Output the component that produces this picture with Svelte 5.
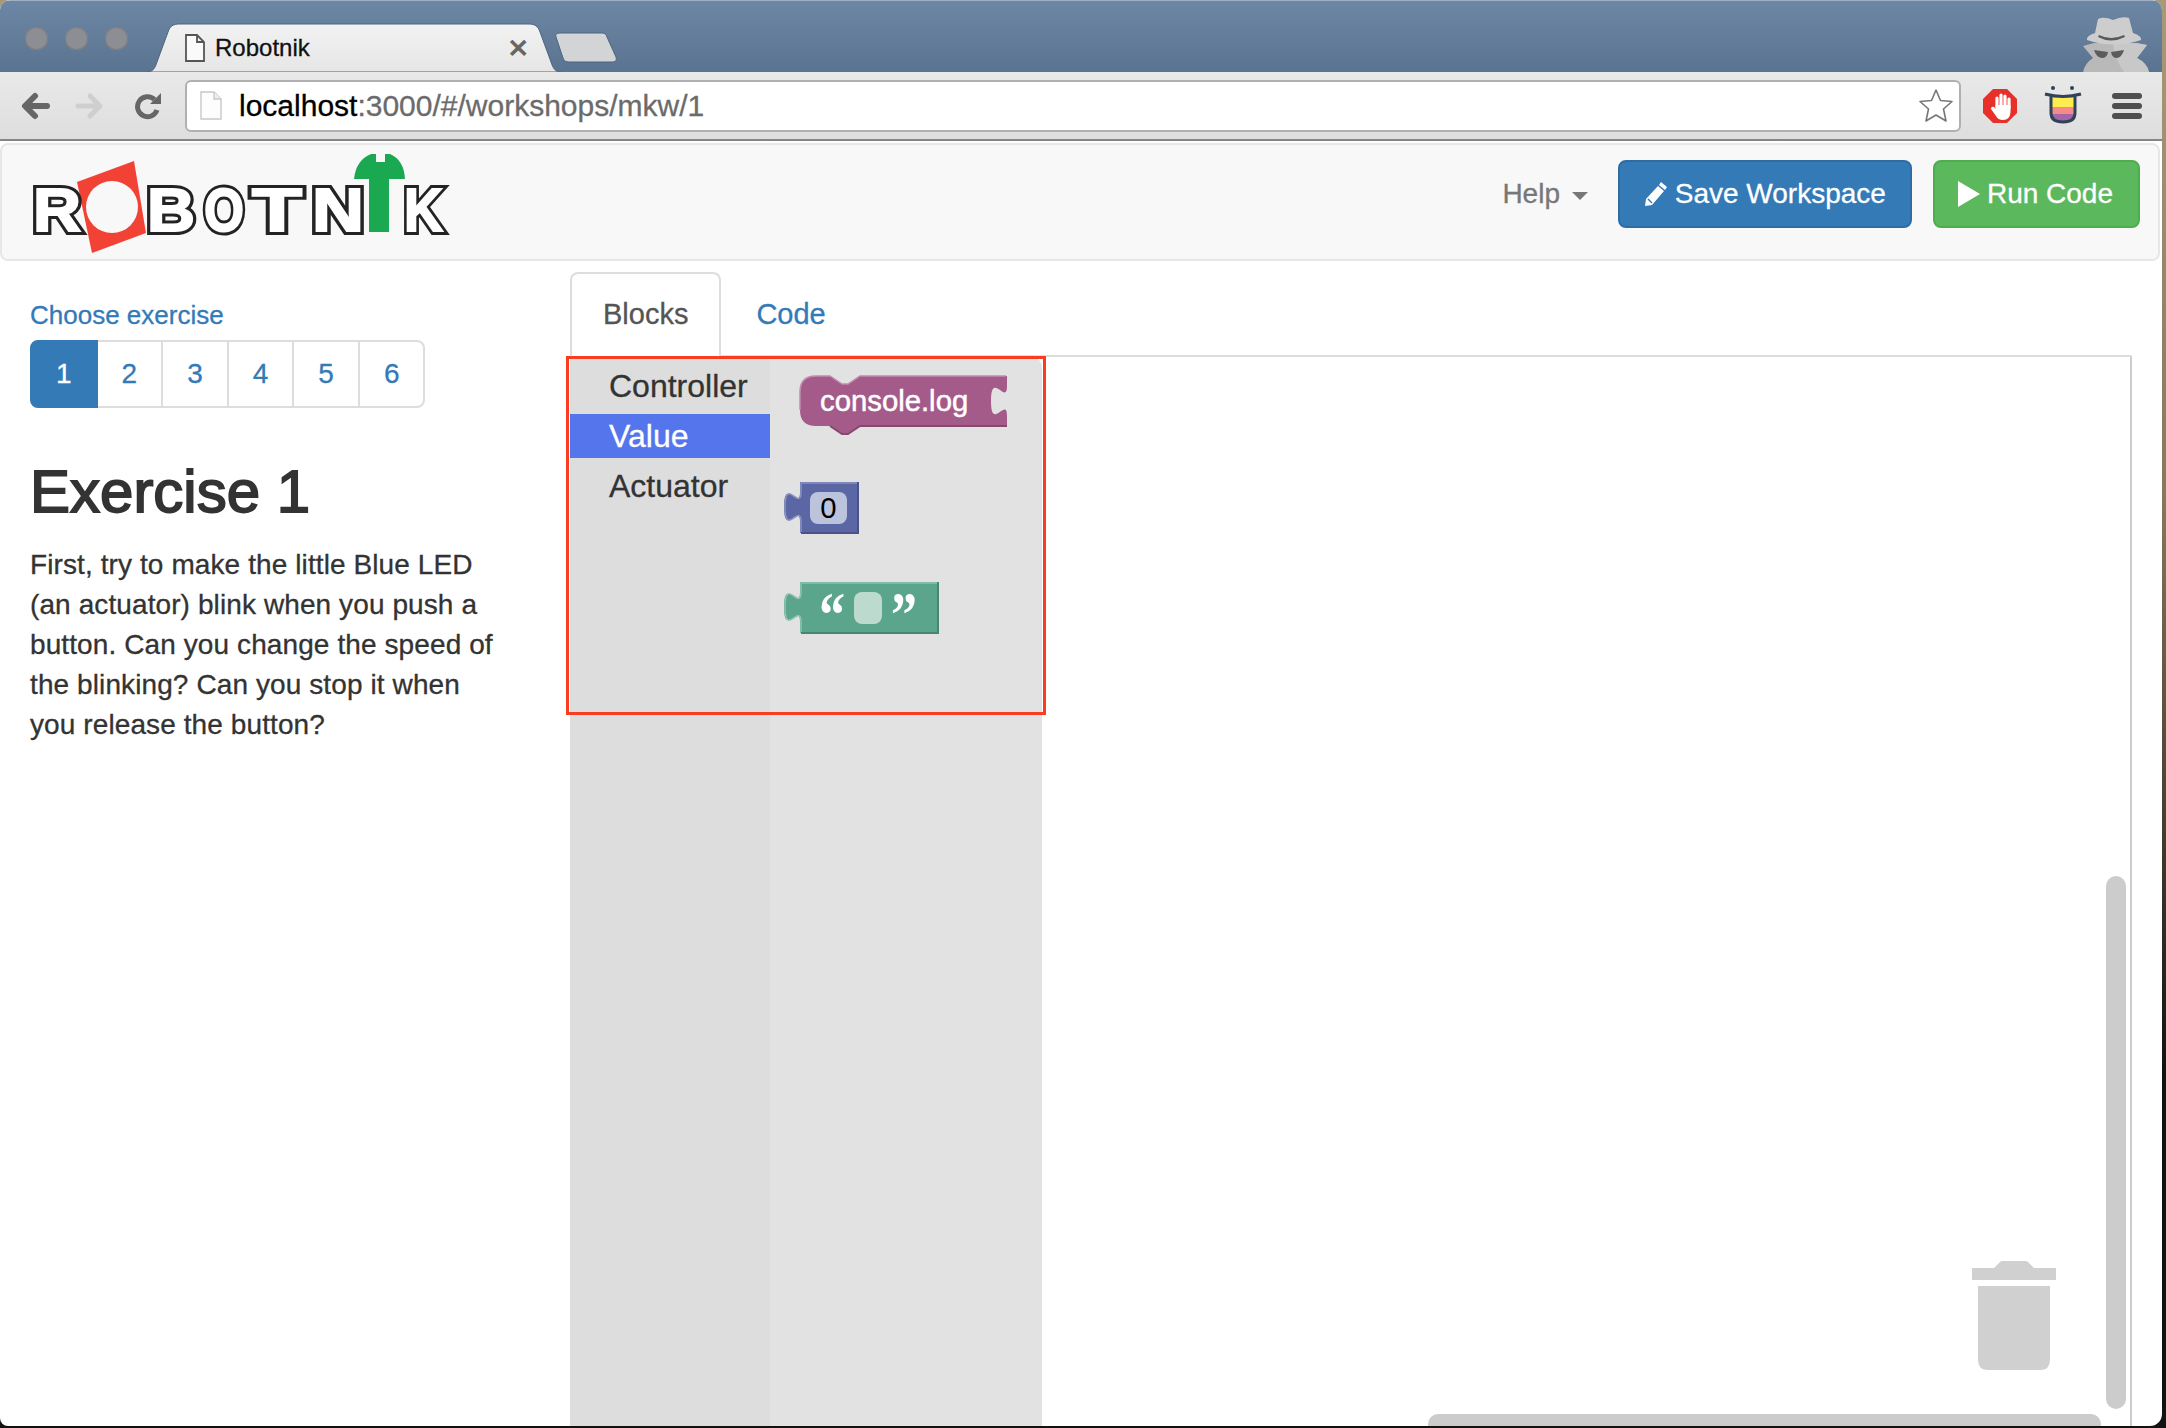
<script>
	const pages = [1, 2, 3, 4, 5, 6];
	const categories = ['Controller', 'Value', 'Actuator'];
	// x and stretched width of each letter in the logo
	const letters = [
		{ c: 'R', x: 33, w: 48 },
		{ c: 'B', x: 147, w: 48 },
		{ c: 'O', x: 204, w: 40 },
		{ c: 'T', x: 252, w: 50 },
		{ c: 'N', x: 312, w: 52 },
		{ c: 'K', x: 404, w: 39 }
	];
</script>

<div class="window">
	<header class="tabstrip">
		<div class="lights">
			<span></span>
			<span></span>
			<span></span>
		</div>
		<div class="tab">
			<svg class="tab-bg" width="414" height="49" viewBox="0 0 414 49">
				<defs>
					<linearGradient id="tabfill" x1="0" y1="0" x2="0" y2="1">
						<stop offset="0" stop-color="#f2f2f2" />
						<stop offset="1" stop-color="#e6e6e6" />
					</linearGradient>
				</defs>
				<path
					d="M0 49 C6 49 8 45 10 39 L21 9 C23 3 26 1 33 1 L381 1 C388 1 391 3 393 9 L404 39 C406 45 408 49 414 49 Z"
					fill="url(#tabfill)"
					stroke="#4d6580"
					stroke-width="1"
				/>
			</svg>
			<svg class="tab-doc" width="20" height="28" viewBox="0 0 20 28">
				<path d="M1 1 H12 L19 8 V27 H1 Z M12 1 V8 H19" fill="#fafafa" stroke="#555" stroke-width="1.8" />
			</svg>
			<span class="tab-title">Robotnik</span>
			<span class="tab-close">×</span>
		</div>
		<svg class="newtab" width="62" height="31" viewBox="0 0 62 31">
			<path
				d="M1 5 C0 2 2 1 5 1 L47 1 C50 1 51 2 52 5 L61 25 C62 29 60 30 57 30 L14 30 C11 30 9 29 8 26 Z"
				fill="#d3d4d6"
				stroke="#4d6580"
			/>
		</svg>
		<svg class="incognito" width="70" height="56" viewBox="0 0 70 56">
			<path d="M3 30 L14 27 H56 L67 29 L57 42 Q67 47 69 56 H3 Q5 47 13 42 Z" fill="#b9b9b9" />
			<path d="M33 27 H56 L67 29 L57 42 Q67 47 69 56 H44 Q34 42 33 27 Z" fill="#c8c8c8" />
			<path d="M18 3 Q24 0 33 4 Q42 0 49 2 L53 17 Q62 20 61 24 Q34 33 7 24 Q6 20 15 17 Z" fill="#cdcdcd" />
			<path d="M18 21 Q31 28 45 21 L44 19 Q31 25 19 19 Z" fill="#5a5a5a" />
			<path d="M14 34 L28 36 Q27 42 22 42 Q16 41 14 34 Z M31 36 L44 34 Q42 41 37 42 Q32 42 31 36 Z" fill="#5c5c5c" />
		</svg>
	</header>

	<div class="toolbar">
		<svg class="nav-icon" width="30" height="28" viewBox="0 0 30 28">
			<path d="M27 14 H7 M15 4 L5 14 L15 24" fill="none" stroke="#666" stroke-width="6" stroke-linecap="round" stroke-linejoin="round" />
		</svg>
		<svg class="nav-icon" width="30" height="28" viewBox="0 0 30 28">
			<path d="M3 14 H24 M15 4 L25 14 L15 24" fill="none" stroke="#cfcfcf" stroke-width="5" stroke-linecap="round" stroke-linejoin="round" />
		</svg>
		<svg class="nav-icon reload" width="28" height="28" viewBox="0 0 28 28">
			<path d="M20.5 7.5 A10 10 0 1 0 23 18" fill="none" stroke="#666" stroke-width="5" />
			<path d="M16 12 H27 V1 Z" fill="#666" />
		</svg>
		<div class="omnibox">
			<svg width="22" height="29" viewBox="0 0 22 29">
				<path d="M1 1 H14 L21 8 V28 H1 Z" fill="#fdfdfd" stroke="#c8c8c8" stroke-width="1.4" />
				<path d="M14 1 V8 H21" fill="#eee" stroke="#c8c8c8" stroke-width="1.4" />
			</svg>
			<span class="url"><b>localhost</b>:3000/#/workshops/mkw/1</span>
			<svg class="star" width="36" height="35" viewBox="0 0 36 35">
				<path
					d="M18 2 L22.5 12.5 L34 13.5 L25.5 21 L28 33 L18 27 L8 33 L10.5 21 L2 13.5 L13.5 12.5 Z"
					fill="#fff"
					stroke="#777"
					stroke-width="1.6"
					stroke-linejoin="round"
				/>
			</svg>
		</div>
		<svg class="ext-stop" width="36" height="36" viewBox="0 0 36 36">
			<path d="M11 1 H25 L35 11 V25 L25 35 H11 L1 25 V11 Z" fill="#e8302a" />
			<path d="M15 10 V19 M19 7 V19 M23 8 V19 M27 11 V20" fill="none" stroke="#fff" stroke-width="3.2" stroke-linecap="round" />
			<path d="M13.5 17 H28.5 V24 Q28 32 21 32 Q16 32 14 28 L9 21 Q9 18 12 19 L13.5 21 Z" fill="#fff" />
		</svg>
		<svg class="ext-tongue" width="38" height="38" viewBox="0 0 38 38">
			<circle cx="9" cy="2" r="2" fill="#2f4358" />
			<circle cx="28" cy="2" r="2" fill="#2f4358" />
			<path d="M7 11 H31 V28 Q31 36 19 36 Q7 36 7 28 Z" fill="#fdeb4f" />
			<path d="M7 21 H31 V28 H7 Z" fill="#f58a8a" />
			<path d="M7 28 H31 Q31 36 19 36 Q7 36 7 28 Z" fill="#a566a8" />
			<path d="M1 8 Q19 13 37 8 M7 10 V27 Q7 36 19 36 Q31 36 31 27 V10" fill="none" stroke="#2f4358" stroke-width="3" />
		</svg>
		<div class="hamburger"><i></i><i></i><i></i></div>
	</div>

	<nav class="navbar">
		<svg class="logo" width="424" height="104" viewBox="30 152 424 104">
			<path d="M77 182 L134 161 L146 233 L92 253 Z" fill="#f24236" />
			<circle cx="112" cy="207" r="26" fill="#f8f8f8" />
			{#each letters as l}
				<text class="logo-edge" x={l.x} y="231" textLength={l.w} lengthAdjust="spacingAndGlyphs">{l.c}</text>
			{/each}
			{#each letters as l}
				<text class="logo-fill" x={l.x} y="231" textLength={l.w} lengthAdjust="spacingAndGlyphs">{l.c}</text>
			{/each}
			<path
				d="M354 179 Q356 160 371 154 H376 V162 H385 V154 H390 Q404 160 405 179 H389 V232 H369 V179 Z"
				fill="#1aa850"
			/>
		</svg>
		<div class="nav-right">
			<span class="help">Help <i class="caret"></i></span>
			<button class="btn btn-primary">
				<svg width="24" height="26" viewBox="0 0 24 26">
					<path d="M17 1 L23 6 L21 9 L15 4 Z M14 5 L20 10 L8 24 L1 25 L2 18 Z" fill="#fff" />
					<path d="M4 18 L8 22" stroke="#337ab7" stroke-width="1.5" />
				</svg>
				Save Workspace
			</button>
			<button class="btn btn-success">
				<svg width="22" height="26" viewBox="0 0 22 26"><path d="M0 0 L22 13 L0 26 Z" fill="#fff" /></svg>
				Run Code
			</button>
		</div>
	</nav>

	<main class="content">
		<aside class="sidebar">
			<a class="choose" href="#top">Choose exercise</a>
			<ul class="pagination">
				{#each pages as p}
					<li class:active={p === 1}>{p}</li>
				{/each}
			</ul>
			<h3>Exercise 1</h3>
			<p>
				First, try to make the little Blue LED (an actuator) blink when you push a button. Can you
				change the speed of the blinking? Can you stop it when you release the button?
			</p>
		</aside>

		<section class="workarea">
			<div class="tabs">
				<span class="ntab current">Blocks</span>
				<span class="ntab">Code</span>
			</div>
			<div class="workspace">
				<div class="toolbox">
					{#each categories as c}
						<div class="cat" class:selected={c === 'Value'}>{c}</div>
					{/each}
				</div>
				<div class="flyout">
					<svg class="blocks" width="272" height="340" viewBox="770 357 272 340">
						<!-- console.log -->
						<path
							d="M800 392 Q800 376 816 376 H830 l12 8 6 0 12 -8 H1007 V386 c0 20 -16 -16 -16 15 s16 -5 16 15 V426 H860 l-12 8 -6 0 -12 -8 H816 Q800 426 800 410 Z"
							fill="#a55b8a"
						/>
						<path d="M800 410 V392 Q800 376 816 376 H830 l12 8 6 0 12 -8 H1006" fill="none" stroke="#c18cad" stroke-width="1.5" />
						<path d="M1007 426 H860 l-12 8 -6 0 -12 -8" fill="none" stroke="#844a6f" stroke-width="2" />
						<text class="block-label" x="820" y="411">console.log</text>

						<!-- number -->
						<path
							d="M800 482 H858 V533 H800 V522 c0 -20 -16 16 -16 -15 s16 5 16 -15 Z"
							fill="#5b67a5"
						/>
						<path d="M801 533 V522 c0 -20 -16 16 -16 -15 s16 5 16 -15 V483 H858" fill="none" stroke="#8a93c0" stroke-width="1.5" />
						<path d="M858 482 V533 H801" fill="none" stroke="#49538a" stroke-width="2" />
						<rect x="810" y="492" width="37" height="32" rx="8" fill="#bcc3dd" />
						<text class="block-num" x="828.5" y="518">0</text>

						<!-- string -->
						<path
							d="M800 582 H938 V633 H800 V622 c0 -20 -16 16 -16 -15 s16 5 16 -15 Z"
							fill="#5ba58c"
						/>
						<path d="M801 633 V622 c0 -20 -16 16 -16 -15 s16 5 16 -15 V583 H938" fill="none" stroke="#8dc4b1" stroke-width="1.5" />
						<path d="M938 582 V633 H801" fill="none" stroke="#49856f" stroke-width="2" />
						<rect x="854" y="592" width="28" height="32" rx="8" fill="#bddacf" />
						<text class="block-quote" x="819" y="636" textLength="26" lengthAdjust="spacingAndGlyphs">“</text>
						<text class="block-quote" x="891" y="636" textLength="26" lengthAdjust="spacingAndGlyphs">”</text>
					</svg>
				</div>
				<div class="canvas">
					<svg class="trash" width="84" height="110" viewBox="0 0 84 110">
						<path d="M0 7 H22 L28 1 Q29 0 31 0 H53 Q55 0 56 1 L62 7 H84 V19 H0 Z" fill="#d0d0d0" />
						<path d="M6 25 H78 V99 Q78 109 68 109 H16 Q6 109 6 99 Z" fill="#d0d0d0" />
					</svg>
					<div class="scroll-v"></div>
					<div class="scroll-h"></div>
				</div>
			</div>
			<div class="redbox"></div>
		</section>
	</main>
</div>

<style>
	:global(body) {
		margin: 0;
		background: linear-gradient(180deg, #a89a78 0%, #85785c 35%, #141210 75%);
		height: 1428px;
	}

	.window {
		width: 2162px;
		height: 1426px;
		position: relative;
		overflow: hidden;
		background: #fff;
		border-radius: 10px 10px 12px 8px;
		font-family: 'Liberation Sans', Arial, sans-serif;
		color: #333;
		font-size: 28px;
		line-height: 40px;
		-webkit-text-stroke: 0.3px;
	}

	.tabstrip {
		height: 72px;
		display: flex;
		position: relative;
		background: linear-gradient(180deg, #6c87a5 0%, #5a7390 100%);
		border-top: 1px solid #9fb0c2;
		box-sizing: border-box;
	}
	.lights {
		display: flex;
		gap: 17px;
		padding: 26px 0 0 25px;
		width: 122px;
		flex: none;
		box-sizing: border-box;
	}
	.lights span {
		flex: none;
		width: 23px;
		height: 23px;
		border-radius: 50%;
		background: #8d8e93;
		box-shadow: inset 0 0 0 1px #7d7e84;
	}
	.tab {
		position: relative;
		width: 414px;
		margin-top: 22px;
		flex: none;
		display: flex;
		align-items: flex-start;
		margin-left: 25px;
		margin-right: -6px;
	}
	.tab-bg {
		position: absolute;
		left: 0;
		top: 0;
	}
	.tab-doc {
		position: relative;
		margin: 11px 0 0 38px;
	}
	.tab-title {
		position: relative;
		margin: 5px 0 0 10px;
		font-size: 24px;
		line-height: 40px;
		color: #111;
	}
	.tab-close {
		position: relative;
		margin: 3px 0 0 auto;
		padding-right: 33px;
		font-size: 34px;
		line-height: 42px;
		color: #666;
		-webkit-text-stroke: 1px;
	}
	.newtab {
		margin-top: 31px;
	}
	.incognito {
		position: absolute;
		left: 2080px;
		top: 15px;
	}

	.toolbar {
		height: 69px;
		box-sizing: border-box;
		display: flex;
		align-items: center;
		padding: 0 0 0 20px;
		background: linear-gradient(180deg, #e9e9e9 0%, #dedede 100%);
		border-bottom: 2px solid #858585;
	}
	.nav-icon {
		margin-right: 25px;
		flex: none;
	}
	.nav-icon.reload {
		margin-left: 4px;
		margin-right: 23px;
	}
	.omnibox {
		width: 1776px;
		flex: none;
		height: 52px;
		box-sizing: border-box;
		display: flex;
		align-items: center;
		background: #fff;
		border: 2px solid #b0b0b0;
		border-radius: 6px;
		padding: 0 5px 0 13px;
	}
	.url {
		margin-left: 17px;
		font-size: 30px;
		color: #6b6b6b;
		white-space: nowrap;
	}
	.url b {
		font-weight: normal;
		color: #000;
	}
	.star {
		margin-left: auto;
	}
	.ext-stop {
		margin-left: 21px;
		flex: none;
	}
	.ext-tongue {
		margin-left: 26px;
		margin-top: -2px;
		flex: none;
	}
	.hamburger {
		margin-left: 30px;
		width: 30px;
		flex: none;
		display: flex;
		flex-direction: column;
		gap: 4px;
	}
	.hamburger i {
		display: block;
		height: 6px;
		border-radius: 3px;
		background: #4f4f4f;
	}

	.navbar {
		height: 118px;
		margin: 2px 2px 0 0;
		box-sizing: border-box;
		display: flex;
		justify-content: space-between;
		align-items: flex-start;
		background: #f8f8f8;
		border: 2px solid #e7e7e7;
		border-radius: 8px;
	}
	.logo {
		margin: 7px 0 0 28px;
		flex: none;
		-webkit-text-stroke: 0;
	}
	.logo text {
		font-family: 'Liberation Sans', Arial, sans-serif;
		font-weight: bold;
		font-size: 61px;
	}
	.logo-edge {
		fill: #232323;
		stroke: #232323;
		stroke-width: 8px;
		stroke-linejoin: miter;
	}
	.logo-fill {
		fill: #fff;
		stroke: #fff;
		stroke-width: 2px;
	}
	.nav-right {
		display: flex;
		align-items: center;
		margin: 15px 18px 0 0;
	}
	.help {
		color: #777;
		margin-right: 30px;
		white-space: nowrap;
	}
	.caret {
		display: inline-block;
		width: 0;
		height: 0;
		margin-left: 4px;
		vertical-align: middle;
		border-top: 8px solid #777;
		border-left: 8px solid transparent;
		border-right: 8px solid transparent;
	}
	.btn {
		font: inherit;
		height: 68px;
		padding: 0 24px;
		display: flex;
		align-items: center;
		gap: 7px;
		color: #fff;
		border-radius: 8px;
		border: 2px solid transparent;
		box-sizing: border-box;
		white-space: nowrap;
	}
	.btn-primary {
		background: #337ab7;
		border-color: #2e6da4;
		margin-right: 21px;
	}
	.btn-success {
		background: #5cb85c;
		border-color: #4cae4c;
		padding: 0 25px 0 23px;
	}

	.content {
		display: flex;
		height: 1165px;
	}
	.sidebar {
		width: 570px;
		flex: none;
		box-sizing: border-box;
		padding: 34px 60px 0 30px;
	}
	.choose {
		display: block;
		color: #337ab7;
		text-decoration: none;
		font-size: 26px;
		line-height: 40px;
	}
	.pagination {
		display: flex;
		list-style: none;
		margin: 5px 0 0;
		padding: 0;
	}
	.pagination li {
		padding: 12px 24px;
		border: 2px solid #ddd;
		margin-left: -2px;
		color: #337ab7;
		background: #fff;
	}
	.pagination li:first-child {
		margin-left: 0;
		border-radius: 8px 0 0 8px;
	}
	.pagination li:last-child {
		border-radius: 0 8px 8px 0;
	}
	.pagination li.active {
		background: #337ab7;
		border-color: #337ab7;
		color: #fff;
		position: relative;
	}
	h3 {
		margin: 51px 0 20px;
		font-size: 60px;
		line-height: 66px;
		font-weight: 400;
		-webkit-text-stroke: 1.8px;
	}
	p {
		margin: 0;
		letter-spacing: 0.1px;
	}

	.workarea {
		flex: 1;
		position: relative;
		margin-right: 30px;
		display: flex;
		flex-direction: column;
	}
	.tabs {
		display: flex;
		height: 85px;
		margin-top: 11px;
		flex: none;
		box-sizing: border-box;
		border-bottom: 2px solid #ddd;
	}
	.ntab {
		padding: 20px 31px 0;
		color: #337ab7;
		height: 85px;
		font-size: 29px;
		box-sizing: border-box;
		border: 2px solid transparent;
	}
	.ntab.current {
		color: #555;
		background: #fff;
		border-color: #ddd #ddd #fff;
		border-radius: 8px 8px 0 0;
		margin-right: 2px;
	}
	.workspace {
		flex: 1;
		display: flex;
		border-right: 2px solid #ccc;
	}
	.toolbox {
		width: 200px;
		flex: none;
		background: #ddd;
		padding-top: 7px;
		box-sizing: border-box;
	}
	.cat {
		height: 44px;
		margin-bottom: 6px;
		padding-left: 39px;
		font-size: 32px;
		line-height: 44px;
		color: #333;
	}
	.cat.selected {
		background: #5575ed;
		color: #fff;
	}
	.flyout {
		width: 272px;
		flex: none;
		background: #e2e2e2;
		border-top-right-radius: 10px;
	}
	.blocks {
		display: block;
	}
	.block-label {
		font-family: 'Liberation Sans', Arial, sans-serif;
		font-size: 29.3px;
		fill: #fff;
		stroke: #fff;
		stroke-width: 0.5px;
	}
	.block-num {
		font-family: 'Liberation Sans', Arial, sans-serif;
		font-size: 29.3px;
		fill: #000;
		text-anchor: middle;
	}
	.block-quote {
		font-family: 'Liberation Serif', serif;
		font-weight: bold;
		font-size: 64px;
		fill: #fff;
	}
	.canvas {
		flex: 1;
		position: relative;
	}
	.trash {
		position: absolute;
		left: 930px;
		top: 904px;
	}
	.scroll-v {
		position: absolute;
		left: 1064px;
		top: 519px;
		width: 20px;
		height: 533px;
		border-radius: 10px;
		background: #ccc;
	}
	.scroll-h {
		position: absolute;
		left: 386px;
		top: 1057px;
		width: 673px;
		height: 20px;
		border-radius: 10px;
		background: #ccc;
	}
	.redbox {
		position: absolute;
		left: -4px;
		top: 95px;
		width: 480px;
		height: 359px;
		box-sizing: border-box;
		border: 3px solid #f83d20;
	}
</style>
